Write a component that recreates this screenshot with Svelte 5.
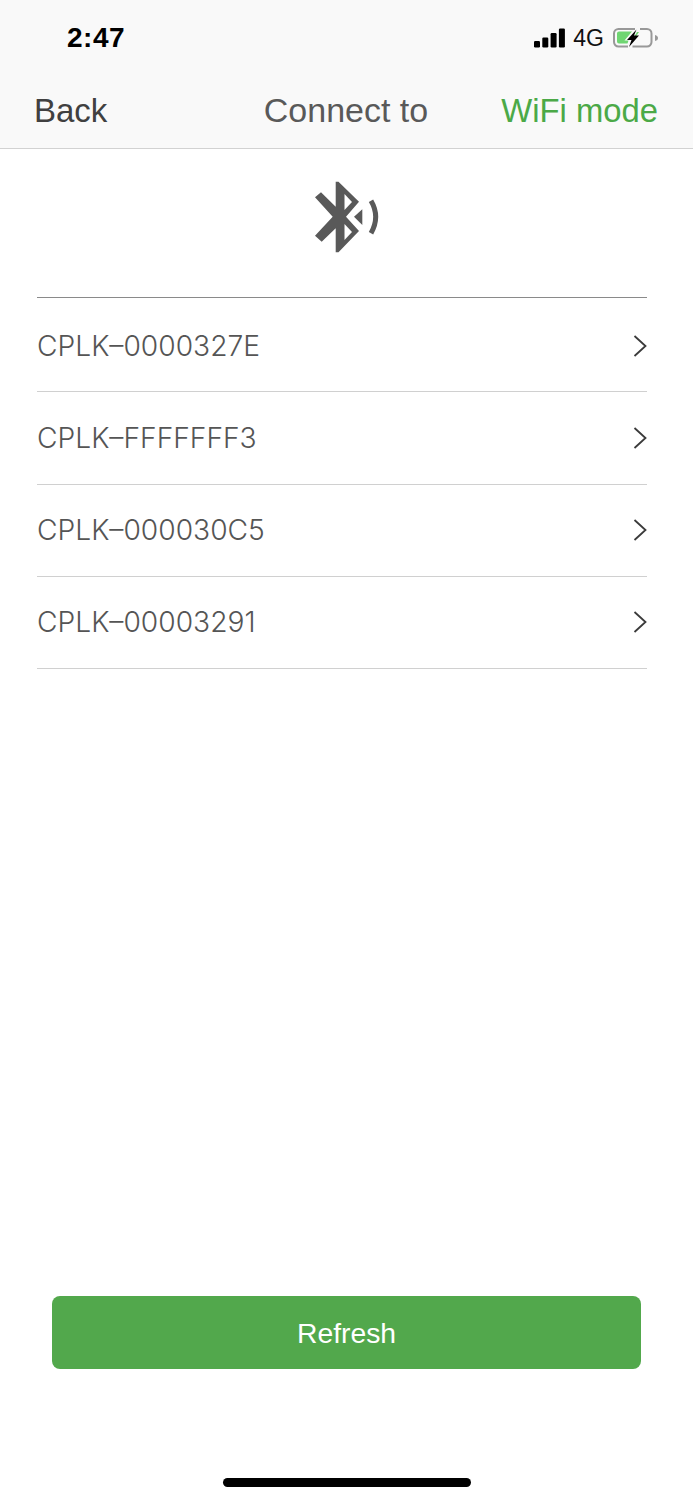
<script>
  let devices = ['CPLK–0000327E', 'CPLK–FFFFFFF3', 'CPLK–000030C5', 'CPLK–00003291'];
</script>

<div class="page">
  <header class="top">
    <div class="status">
      <span class="time">2:47</span>
      <div class="status-right">
        <svg class="signal" width="31" height="20" viewBox="0 0 31 20" fill="#000">
          <rect x="0" y="13" width="6" height="6.500" rx="1.200" />
          <rect x="8.300" y="9.500" width="6" height="10" rx="1.200" />
          <rect x="16.600" y="5" width="6" height="14.500" rx="1.200" />
          <rect x="24.900" y="0.500" width="6" height="19" rx="1.200" />
        </svg>
        <span class="net">4G</span>
        <svg class="battery" width="46" height="24" viewBox="0 0 46 24">
          <path d="M22 3 H5.500 A4.500 4.500 0 0 0 1 7.500 V16 A4.500 4.500 0 0 0 5.500 20.500 H15 M27 3 H34 A4.500 4.500 0 0 1 38.500 7.500 V16 A4.500 4.500 0 0 1 34 20.500 H19.500" fill="none" stroke="#999" stroke-width="2" />
          <path d="M6 5.500 H19 L11.500 14.500 H15.500 L14.500 17.500 H6 A2 2 0 0 1 4 15.500 V7.500 A2 2 0 0 1 6 5.500 Z" fill="#6fd672" />
          <path d="M24 6 H26 L22.500 11 H21 Z" fill="#6fd672" />
          <path d="M42 9c2 .5 3 1.500 3 3s-1 2.500-3 3z" fill="#999" />
          <path d="M23.500 3.500 L14 14 H18.500 L16 21 L26 9.500 H21 Z" fill="#000" />
        </svg>
      </div>
    </div>
    <nav class="nav">
      <span class="back">Back</span>
      <span class="title">Connect to</span>
      <span class="mode">WiFi mode</span>
    </nav>
  </header>

  <div class="bt-icon">
    <svg width="69" height="74" viewBox="0 0 69 74" fill="#595959">
      <path fill-rule="evenodd" d="M23.700 1.700 L26.500 1.700 L47 21.700 L34 36.700 L47 51 L26.500 72.300 L23.700 72.300 L23.700 48.300 L9.700 61.700 L3 55.700 L20.700 36.700 L3 17.300 L9 12.300 L23.700 26.700 Z M32.500 14 L32.500 30 L40 22 Z M32.500 44 L32.500 60 L40 52 Z" />
      <path d="M50.300 29.300 L42 36.700 L50.300 45 Z" />
      <path d="M59 20.700 Q68.400 36.700 59 53.300" fill="none" stroke="#595959" stroke-width="5" />
    </svg>
  </div>

  <ul class="list">
    {#each devices as name}
      <li class="row">
        <span class="name">{name}</span>
        <svg width="14" height="22" viewBox="0 0 14 22" fill="none" stroke="#3a3a3a" stroke-width="1.800">
          <path d="M1.500 1 L12.500 11 L1.500 21" />
        </svg>
      </li>
    {/each}
  </ul>

  <div class="spacer"></div>

  <button class="refresh">Refresh</button>

  <div class="home-wrap"><div class="home"></div></div>
</div>

<style>
  :global(body) {
    margin: 0;
    background: #fff;
  }

  .page {
    width: 693px;
    height: 1500px;
    display: flex;
    flex-direction: column;
    font-family: "Liberation Sans", Arial, sans-serif;
    overflow: hidden;
  }

  .top {
    height: 149px;
    box-sizing: border-box;
    background: #f9f9f9;
    border-bottom: 1px solid #d2d2d2;
  }

  .status {
    height: 76px;
    display: flex;
    justify-content: space-between;
    align-items: center;
    padding: 0 34px 0 67px;
  }

  .time {
    font-size: 28px;
    font-weight: 700;
    color: #000;
    letter-spacing: 0.5px;
  }

  .status-right {
    display: flex;
    align-items: center;
  }

  .signal {
    margin-right: 8px;
  }

  .net {
    font-size: 23px;
    color: #111;
    margin-right: 9px;
  }

  .nav {
    display: grid;
    grid-template-columns: 1fr auto 1fr;
    align-items: center;
    padding: 0 35px 0 34px;
    height: 70px;
  }

  .back {
    font-size: 33px;
    color: #404040;
  }

  .title {
    font-size: 34px;
    color: #595959;
    margin-top: -2px;
  }

  .mode {
    font-size: 32.800px;
    color: #4ba947;
    text-align: right;
    white-space: nowrap;
  }

  .bt-icon {
    height: 148px;
    display: flex;
    justify-content: center;
    align-items: center;
    padding-bottom: 12px;
    box-sizing: border-box;
  }

  .list {
    list-style: none;
    margin: 0 46px 0 37px;
    padding: 2px 0 0;
    border-top: 1px solid #8a8a8a;
  }

  .row {
    height: 92.250px;
    box-sizing: border-box;
    display: flex;
    justify-content: space-between;
    align-items: center;
    border-bottom: 1px solid #d0d0d0;
  }

  .name {
    font-family: Inter, "Liberation Sans", sans-serif;
    font-size: 28.200px;
    font-weight: 300;
    color: #555;
  }

  .spacer {
    flex: 1;
  }

  .refresh {
    margin: 0 52px;
    height: 73px;
    padding: 2px 0 0;
    border: none;
    border-radius: 8px;
    background: #52a84c;
    color: #fff;
    font-family: inherit;
    font-size: 28.300px;
  }

  .home-wrap {
    height: 131px;
    display: flex;
    justify-content: center;
    align-items: flex-end;
    padding-bottom: 13px;
    box-sizing: border-box;
  }

  .home {
    width: 248px;
    height: 9px;
    border-radius: 5px;
    background: #000;
  }
</style>
